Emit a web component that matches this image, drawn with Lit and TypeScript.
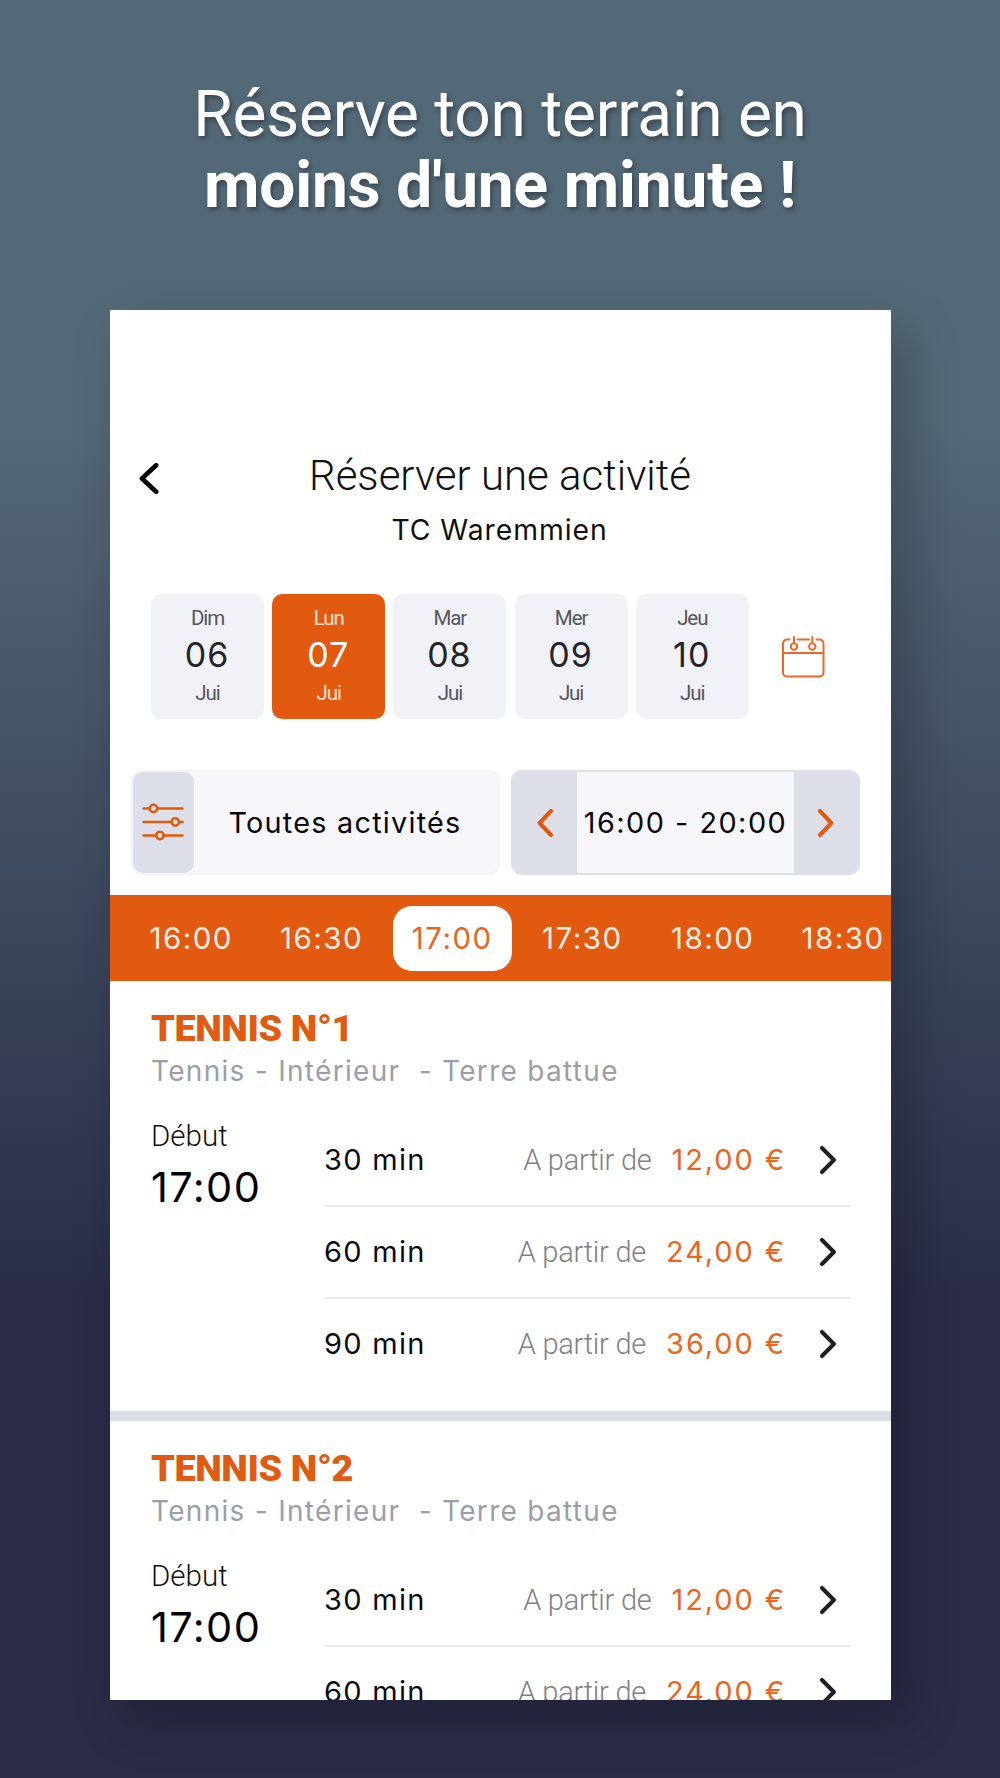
import { LitElement, html, css, svg } from "lit";
import { customElement, property } from "lit/decorators.js";
import { classMap } from "lit/directives/class-map.js";

interface Day {
  name: string;
  num: string;
  month: string;
  active?: boolean;
}

interface Offer {
  duration: string;
  price: string;
}

const DAYS: Day[] = [
  { name: "Dim", num: "06", month: "Jui" },
  { name: "Lun", num: "07", month: "Jui", active: true },
  { name: "Mar", num: "08", month: "Jui" },
  { name: "Mer", num: "09", month: "Jui" },
  { name: "Jeu", num: "10", month: "Jui" },
];

const SLOTS = ["16:00", "16:30", "17:00", "17:30", "18:00", "18:30"];

const OFFERS: Offer[] = [
  { duration: "30 min", price: "12,00 €" },
  { duration: "60 min", price: "24,00 €" },
  { duration: "90 min", price: "36,00 €" },
];

const chevron = (dir: "left" | "right", w: number, h: number, stroke: number) => {
  const a = stroke / 2;
  const pts =
    dir === "left"
      ? `${w - a},${a} ${a + 0.6},${h / 2} ${w - a},${h - a}`
      : `${a},${a} ${w - a - 0.6},${h / 2} ${a},${h - a}`;
  return html`<svg class="chevron" width=${w} height=${h} viewBox="0 0 ${w} ${h}">
    ${svg`<polyline points=${pts} fill="none" stroke="currentColor" stroke-width=${stroke}
      stroke-linecap="round" stroke-linejoin="round"></polyline>`}
  </svg>`;
};

@customElement("court-section")
export class CourtSection extends LitElement {
  @property() name = "";
  @property() details = "";
  @property() start = "";
  @property({ attribute: false }) offers: Offer[] = [];

  static styles = css`
    :host {
      display: block;
      box-sizing: border-box;
      height: 440px;
      flex: none;
      padding: 27px 41px 0;
      border-bottom: 10px solid #dcdfe8;
      font-feature-settings: "calt" 0;
    }
    .chevron {
      display: block;
    }
    .name {
      font: 900 37.8px/40px Roboto, sans-serif;
      color: #e15a0f;
      letter-spacing: -0.4px;
    }
    .details {
      margin-top: 6px;
      font: 400 28px/34px Inter, sans-serif;
      letter-spacing: 1.3px;
      color: #9b9ea8;
      white-space: pre;
    }
    .body {
      display: grid;
      grid-template-columns: 173px 1fr;
      margin-top: 27px;
    }
    .label {
      margin-top: 4px;
      font: 350 29.5px/34px Roboto, sans-serif;
      color: #111;
    }
    .hour {
      margin-top: 10px;
      font: 400 41.5px/48px Inter, sans-serif;
      letter-spacing: 1.4px;
      color: #000;
    }
    .offer {
      display: flex;
      align-items: center;
      box-sizing: border-box;
      height: 92px;
      padding-right: 14px;
      border-bottom: 2px solid #ececee;
    }
    .offer:last-child {
      border-color: transparent;
    }
    .duration {
      flex: 1;
      font: 400 29px/34px Inter, sans-serif;
      letter-spacing: 1.3px;
      color: #0c0c0e;
    }
    .from {
      font: 350 29px/34px Roboto, sans-serif;
      letter-spacing: -0.25px;
      color: #808085;
    }
    .price {
      margin: 0 33.5px 0 20px;
      font: 400 29px/34px Inter, sans-serif;
      letter-spacing: 1.9px;
      color: #ea651d;
    }
    .go {
      color: #1d1f26;
    }
  `;

  render() {
    return html`
      <div class="name">${this.name}</div>
      <div class="details">${this.details}</div>
      <div class="body">
        <div>
          <div class="label">Début</div>
          <div class="hour">${this.start}</div>
        </div>
        <div>
          ${this.offers.map(
            (o) => html`<div class="offer">
              <span class="duration">${o.duration}</span>
              <span class="from">A partir de</span>
              <span class="price">${o.price}</span>
              <span class="go">${chevron("right", 16.5, 28, 4)}</span>
            </div>`
          )}
        </div>
      </div>
    `;
  }
}

@customElement("app-root")
export class AppRoot extends LitElement {
  static styles = css`
    :host {
      display: block;
      box-sizing: border-box;
      height: 1778px;
      overflow: hidden;
      background: linear-gradient(#546977 0, #546977 420px, #2a2c48 1300px, #2a2c48 100%);
      font-family: Inter, "Liberation Sans", sans-serif;
      font-feature-settings: "calt" 0;
    }
    .chevron {
      display: block;
    }
    .hero {
      box-sizing: border-box;
      height: 309.5px;
      padding-top: 79px;
      text-align: center;
      font: 400 64px/71px Roboto, sans-serif;
      letter-spacing: -0.25px;
      color: #fff;
      text-shadow: 2px 3px 5px rgba(0, 0, 0, 0.35);
    }
    .hero div + div {
      font-weight: 700;
      letter-spacing: -0.15px;
    }
    .card {
      display: flex;
      flex-direction: column;
      box-sizing: border-box;
      width: 781px;
      height: 1390.5px;
      margin-left: 110px;
      background: #fff;
      overflow: hidden;
      box-shadow: 16px 20px 50px rgba(0, 0, 0, 0.24);
    }
    .header {
      display: grid;
      grid-template-columns: 80px 1fr 80px;
      padding-top: 141px;
      text-align: center;
      flex: none;
    }
    .back {
      padding: 12px 0 0 29px;
      color: #000;
    }
    .title {
      font: 340 42px/50px Roboto, sans-serif;
      color: #111;
      margin-right: 1px;
      white-space: nowrap;
    }
    .club {
      margin: 12px 2px 0 0;
      font: 400 28.3px/34px Inter, sans-serif;
      letter-spacing: 0.95px;
      color: #111;
    }
    .days {
      display: flex;
      gap: 8.2px;
      flex: none;
      margin-top: 47px;
      padding-left: 41px;
    }
    .day {
      box-sizing: border-box;
      width: 113px;
      height: 125px;
      padding-top: 12px;
      border-radius: 10px;
      background: #f1f2f7;
      text-align: center;
      color: #55565c;
      font: 400 20.5px/24px Roboto, sans-serif;
      letter-spacing: -1.1px;
    }
    .day.active {
      background: #e15a0f;
      color: #fbe0d0;
    }
    .num {
      margin: 8px 0 9.5px -1px;
      font: 400 34px/34px Inter, sans-serif;
      letter-spacing: 1px;
      color: #23242a;
    }
    .active .num {
      color: #fff;
    }
    .calendar {
      margin: 40px 0 0 24px;
    }
    .filters {
      display: flex;
      gap: 11px;
      flex: none;
      height: 105px;
      margin: 51.5px 0 20px;
      padding-left: 21px;
    }
    .activity,
    .range {
      display: flex;
      box-sizing: border-box;
      border-radius: 11px;
      border: 2px solid #f3f4f9;
      background: #f7f7fb;
      font: 400 28.8px/34px Inter, sans-serif;
      color: #08080a;
      align-items: center;
      overflow: hidden;
    }
    .activity {
      width: 369px;
      letter-spacing: 1.25px;
    }
    .tune {
      display: flex;
      align-items: center;
      justify-content: center;
      box-sizing: border-box;
      width: 61px;
      height: 101px;
      padding: 0 2px 1px 0;
      border-radius: 10px;
      background: #dcdfe8;
    }
    .activity .text {
      flex: 1;
      text-align: center;
      padding-right: 2px;
    }
    .range {
      width: 349px;
      border-color: #dcdfe8;
      letter-spacing: 1.5px;
    }
    .range .text {
      flex: 1;
      text-align: center;
      white-space: nowrap;
    }
    .step {
      display: flex;
      align-items: center;
      box-sizing: border-box;
      width: 64px;
      height: 101px;
      padding-left: 24px;
      background: #dcdfe8;
      color: #e15a0f;
    }
    .slots {
      display: grid;
      grid-template-columns: repeat(6, 130.4px);
      align-items: center;
      flex: none;
      box-sizing: border-box;
      height: 86px;
      padding-left: 16px;
      background: #e15a0f;
      color: #fdeee5;
      font: 400 29.5px/64px Inter, sans-serif;
      letter-spacing: 1.5px;
      text-align: center;
    }
    .slot.active {
      box-sizing: border-box;
      width: 119px;
      height: 65px;
      margin-left: 6px;
      border-radius: 19px;
      background: #fff;
      color: #e9661f;
    }
  `;

  private calendarIcon() {
    return html`<svg class="calendar" width="44" height="46" viewBox="0 0 44 46" fill="none" stroke="#e9682a" stroke-width="2" stroke-linecap="round">
      <path d="M8.5 5.5H6a4 4 0 0 0-4 4v29a4 4 0 0 0 4 4h32.500a4 4 0 0 0 4-4v-29a4 4 0 0 0-4-4h-3M16.500 5.500h11.500M2 19h40.500" />
      <circle cx="13" cy="12.500" r="3.200" />
      <circle cx="31.300" cy="12.500" r="3.200" />
      <path d="M13 3v6M31.300 3v6" />
    </svg>`;
  }

  private tuneIcon() {
    return html`<svg width="42" height="38" viewBox="0 0 42 38" fill="none" stroke="#e15a0f" stroke-width="2.5" stroke-linecap="round">
      <path d="M1.500 5.500h6M15.500 5.500H40.500M1.500 19h27.500M37 19h3.500M1.500 32.500h12.500M21.500 32.500H40.500" />
      <circle cx="11.500" cy="5.500" r="3.700" />
      <circle cx="33.300" cy="19" r="3.700" />
      <circle cx="18" cy="32.500" r="3.700" />
    </svg>`;
  }

  render() {
    return html`
      <div class="hero">
        <div>Réserve ton terrain en</div>
        <div>moins d'une minute !</div>
      </div>
      <main class="card">
        <header class="header">
          <div class="back">${chevron("left", 19.5, 31, 4.6)}</div>
          <div>
            <div class="title">Réserver une activité</div>
            <div class="club">TC Waremmien</div>
          </div>
        </header>
        <div class="days">
          ${DAYS.map(
            (d) => html`<div class=${classMap({ day: true, active: !!d.active })}>
              <div>${d.name}</div>
              <div class="num">${d.num}</div>
              <div>${d.month}</div>
            </div>`
          )}
          ${this.calendarIcon()}
        </div>
        <div class="filters">
          <div class="activity">
            <div class="tune">${this.tuneIcon()}</div>
            <div class="text">Toutes activités</div>
          </div>
          <div class="range">
            <div class="step">${chevron("left", 16, 28, 4)}</div>
            <div class="text">16:00 - 20:00</div>
            <div class="step">${chevron("right", 16, 28, 4)}</div>
          </div>
        </div>
        <div class="slots">
          ${SLOTS.map((s) => html`<div class=${classMap({ slot: true, active: s === "17:00" })}>${s}</div>`)}
        </div>
        ${["TENNIS N°1", "TENNIS N°2"].map(
          (n) => html`<court-section
            .name=${n}
            .details=${"Tennis - Intérieur  - Terre battue"}
            .start=${"17:00"}
            .offers=${OFFERS}
          ></court-section>`
        )}
      </main>
    `;
  }
}
